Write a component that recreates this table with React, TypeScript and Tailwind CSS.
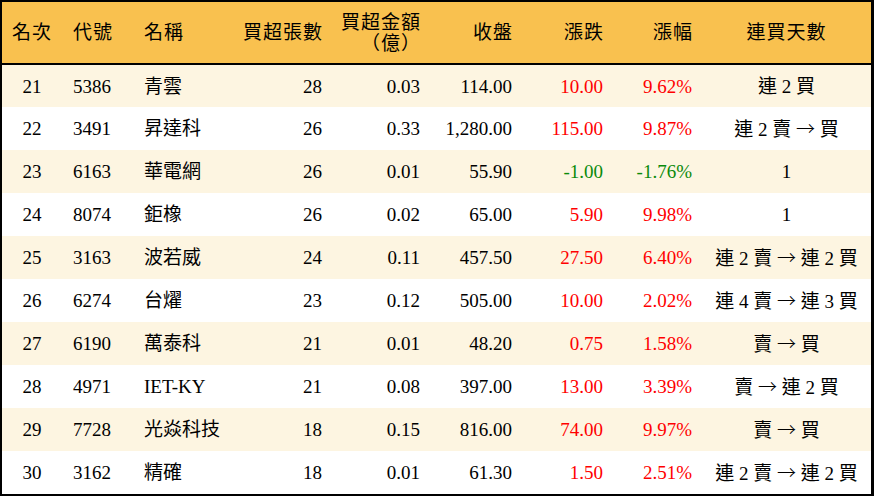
import React from 'react';

interface Fila {
  rango: number;
  codigo: string;
  nombre: string;
  zhang: number;
  monto: string;
  cierre: string;
  cambio: string;
  pct: string;
  dias: string;
}

const filas: Fila[] = [
  { rango: 21, codigo: '5386', nombre: '青雲', zhang: 28, monto: '0.03', cierre: '114.00', cambio: '10.00', pct: '9.62%', dias: '連 2 買' },
  { rango: 22, codigo: '3491', nombre: '昇達科', zhang: 26, monto: '0.33', cierre: '1,280.00', cambio: '115.00', pct: '9.87%', dias: '連 2 賣 → 買' },
  { rango: 23, codigo: '6163', nombre: '華電網', zhang: 26, monto: '0.01', cierre: '55.90', cambio: '-1.00', pct: '-1.76%', dias: '1' },
  { rango: 24, codigo: '8074', nombre: '鉅橡', zhang: 26, monto: '0.02', cierre: '65.00', cambio: '5.90', pct: '9.98%', dias: '1' },
  { rango: 25, codigo: '3163', nombre: '波若威', zhang: 24, monto: '0.11', cierre: '457.50', cambio: '27.50', pct: '6.40%', dias: '連 2 賣 → 連 2 買' },
  { rango: 26, codigo: '6274', nombre: '台燿', zhang: 23, monto: '0.12', cierre: '505.00', cambio: '10.00', pct: '2.02%', dias: '連 4 賣 → 連 3 買' },
  { rango: 27, codigo: '6190', nombre: '萬泰科', zhang: 21, monto: '0.01', cierre: '48.20', cambio: '0.75', pct: '1.58%', dias: '賣 → 買' },
  { rango: 28, codigo: '4971', nombre: 'IET-KY', zhang: 21, monto: '0.08', cierre: '397.00', cambio: '13.00', pct: '3.39%', dias: '賣 → 連 2 買' },
  { rango: 29, codigo: '7728', nombre: '光焱科技', zhang: 18, monto: '0.15', cierre: '816.00', cambio: '74.00', pct: '9.97%', dias: '賣 → 買' },
  { rango: 30, codigo: '3162', nombre: '精確', zhang: 18, monto: '0.01', cierre: '61.30', cambio: '1.50', pct: '2.51%', dias: '連 2 賣 → 連 2 買' },
];

// the arrow is drawn full width in the reference, so take it from the CJK font
function Dias({ texto }: { texto: string }) {
  const partes = texto.split('→');
  return (
    <>
      {partes.map((p, i) => (
        <React.Fragment key={i}>
          {i > 0 && (
            <span style={{ fontFamily: '"Noto Sans CJK TC", sans-serif' }} className="font-light">
              →
            </span>
          )}
          {p}
        </React.Fragment>
      ))}
    </>
  );
}

export default function App() {
  return (
    <div
      className="w-[874px] h-[496px] bg-white text-black text-[19px] leading-none"
      style={{ fontFamily: '"Liberation Serif", "Noto Sans CJK TC", serif' }}
    >
      <div className="h-full border-2 border-r-[3px] border-black overflow-hidden">
        <table className="w-full table-fixed border-collapse">
          <colgroup>
            <col className="w-[60px]" />
            <col className="w-[71px]" />
            <col className="w-[107px]" />
            <col className="w-[92px]" />
            <col className="w-[98px]" />
            <col className="w-[92px]" />
            <col className="w-[91px]" />
            <col className="w-[89px]" />
            <col className="w-[169px]" />
          </colgroup>
          <thead>
            <tr className="h-[62px] bg-[#f9c14f] border-b-2 border-black tracking-[1px]">
              <th className="font-normal text-center">名次</th>
              <th className="font-normal text-left pl-[11px]">代號</th>
              <th className="font-normal text-left pl-[11px]">名稱</th>
              <th className="font-normal text-right pr-[9px]">買超張數</th>
              <th className="font-normal text-right pr-[9px] leading-[21px]">
                買超金額
                <br />
                （億）
              </th>
              <th className="font-normal text-right pr-[9px]">收盤</th>
              <th className="font-normal text-right pr-[9px]">漲跌</th>
              <th className="font-normal text-right pr-[9px]">漲幅</th>
              <th className="font-normal text-center">連買天數</th>
            </tr>
          </thead>
          <tbody>
            {filas.map((f, i) => {
              const baja = f.cambio.startsWith('-');
              const color = baja ? 'text-[#0a8a0a]' : 'text-[#ff0000]';
              return (
                <tr key={f.rango} className={`h-[43px] ${i % 2 === 0 ? 'bg-[#fdf5e1]' : 'bg-white'}`}>
                  <td className="text-center">{f.rango}</td>
                  <td className="text-left pl-[11px]">{f.codigo}</td>
                  <td className="text-left pl-[11px]">{f.nombre}</td>
                  <td className="text-right pr-[10px]">{f.zhang}</td>
                  <td className="text-right pr-[10px]">{f.monto}</td>
                  <td className="text-right pr-[10px]">{f.cierre}</td>
                  <td className={`text-right pr-[10px] ${color}`}>{f.cambio}</td>
                  <td className={`text-right pr-[10px] ${color}`}>{f.pct}</td>
                  <td className="text-center whitespace-nowrap">
                    <Dias texto={f.dias} />
                  </td>
                </tr>
              );
            })}
          </tbody>
        </table>
      </div>
    </div>
  );
}
